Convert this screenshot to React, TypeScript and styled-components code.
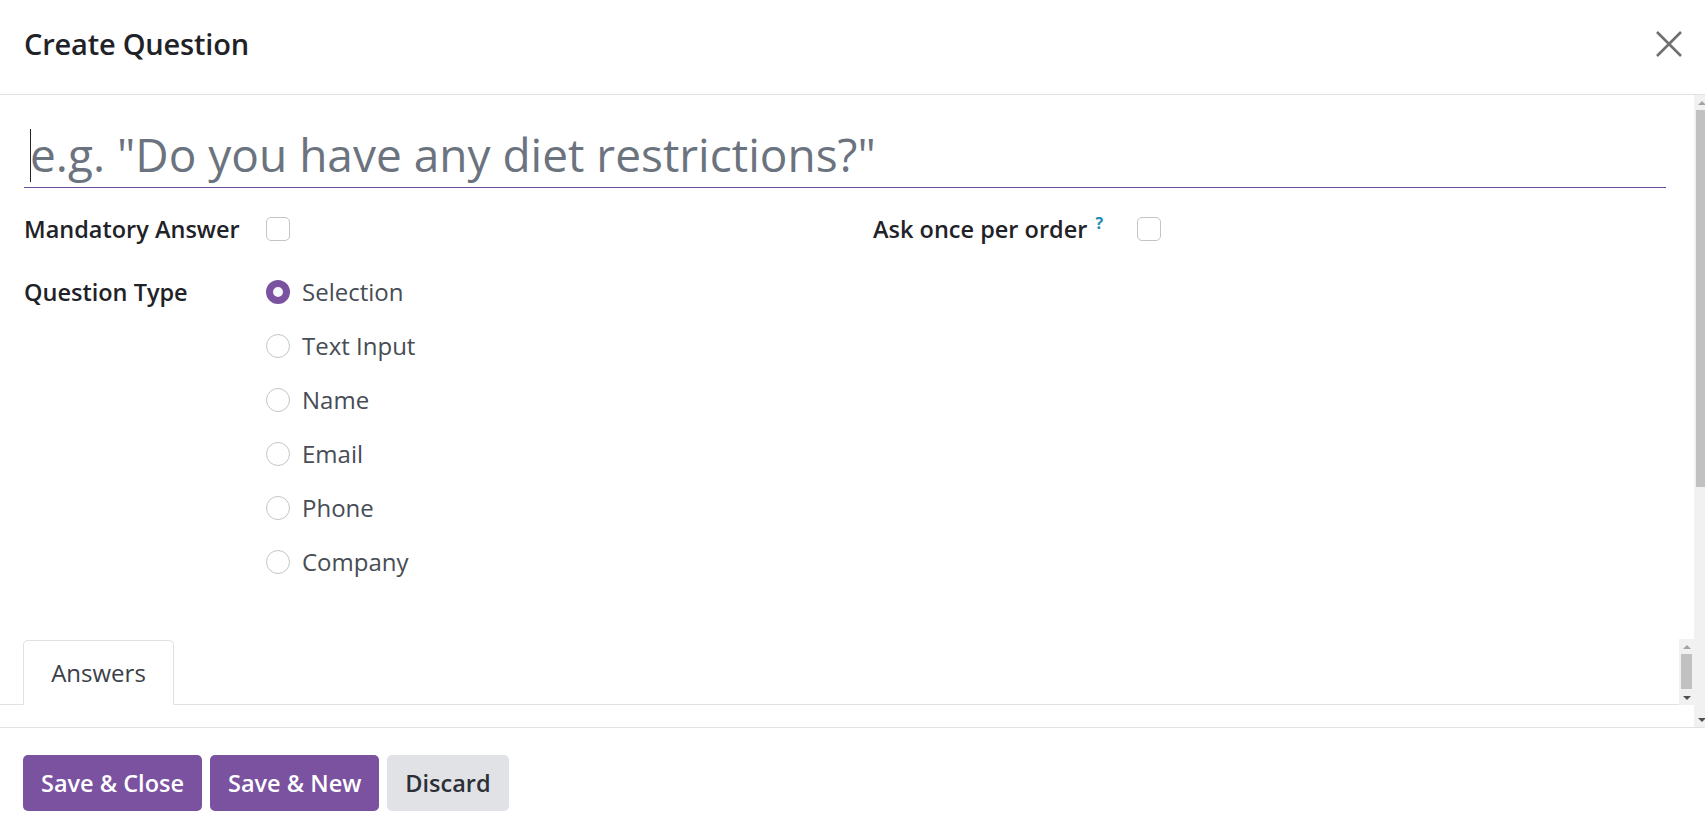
import styled, { createGlobalStyle } from "styled-components";

const GlobalStyle = createGlobalStyle`
  html, body {
    margin: 0;
    padding: 0;
    overflow: hidden;
    background: #ffffff;
  }
  body {
    font-family: "Open Sans", "Noto Sans", sans-serif;
    color: #212529;
  }
  * {
    box-sizing: border-box;
  }
`;

const questionTypes = ["Selection", "Text Input", "Name", "Email", "Phone", "Company"];

// classic grey scrollbar (drawn, the headless browser hides real ones)
function Scrollbar({ thumb }: { thumb: number }) {
  return (
    <Track>
      <Arrow $dir="up" />
      <Thumb style={{ height: thumb }} />
      <TrackRest />
      <Arrow $dir="down" />
    </Track>
  );
}

function App() {
  return (
    <>
      <GlobalStyle />
      <Modal>
        <Header>
          <Title>Create Question</Title>
          <CloseButton aria-label="Close">
            <svg width="26" height="26" viewBox="0 0 26 26">
              <path d="M1 1 L25 25 M25 1 L1 25" stroke="#6f6f6f" strokeWidth="2.6" fill="none" />
            </svg>
          </CloseButton>
        </Header>
        <Body>
          <BodyContent>
            <InputWrap>
              <Caret />
              <TitleInput placeholder={'e.g. "Do you have any diet restrictions?"'} />
            </InputWrap>
            <Groups>
              <Group $labelWidth={242}>
                <Label>Mandatory Answer</Label>
                <Cell>
                  <Checkbox />
                </Cell>
                <Label>Question Type</Label>
                <RadioList>
                  {questionTypes.map((type, i) => (
                    <RadioItem key={type}>
                      <Radio $checked={i === 0} />
                      <RadioText>{type}</RadioText>
                    </RadioItem>
                  ))}
                </RadioList>
              </Group>
              <Group $labelWidth={264}>
                <Label>
                  Ask once per order <Help>?</Help>
                </Label>
                <Cell>
                  <Checkbox />
                </Cell>
              </Group>
            </Groups>
            <TabNav>
              <TabStrip>
                <Tab>Answers</Tab>
              </TabStrip>
              <Scrollbar thumb={35} />
            </TabNav>
          </BodyContent>
          <Scrollbar thumb={377} />
        </Body>
        <Footer>
          <Button $variant="primary">Save &amp; Close</Button>
          <Button $variant="primary">Save &amp; New</Button>
          <Button $variant="secondary">Discard</Button>
        </Footer>
      </Modal>
    </>
  );
}

const Modal = styled.div`
  width: calc(100vw + 4px);
  height: 100vh;
  display: flex;
  flex-direction: column;
  background: #ffffff;
`;

const Header = styled.header`
  height: 95px;
  flex-shrink: 0;
  display: flex;
  align-items: center;
  justify-content: space-between;
  padding: 0 27px 7px 24px;
  border-bottom: 1px solid #e3e1e8;
`;

const Title = styled.h4`
  margin: 0;
  font-size: 29px;
  font-weight: 600;
  color: #1f2328;
  letter-spacing: -0.2px;
`;

const CloseButton = styled.button`
  border: 0;
  background: transparent;
  padding: 0;
  width: 26px;
  height: 26px;
  display: flex;
  cursor: pointer;
`;

const Body = styled.main`
  flex: 1;
  min-height: 0;
  display: flex;
`;

const BodyContent = styled.div`
  flex: 1;
  min-width: 0;
  overflow: hidden;
  padding: 16px 28px 0 24px;
`;

const Track = styled.div`
  width: 15px;
  flex-shrink: 0;
  display: flex;
  flex-direction: column;
  background: #f1f1f1;
`;

const Arrow = styled.div<{ $dir: "up" | "down" }>`
  height: 15px;
  flex-shrink: 0;
  display: flex;
  align-items: center;
  justify-content: center;
  &::before {
    content: "";
    border-left: 4px solid transparent;
    border-right: 4px solid transparent;
    ${(p) =>
      p.$dir === "up" ? "border-bottom: 4px solid #a3a3a3;" : "border-top: 4px solid #505050;"}
  }
`;

const Thumb = styled.div`
  flex-shrink: 0;
  margin: 0 2px;
  background: #c1c1c1;
`;

const TrackRest = styled.div`
  flex: 1;
`;

const InputWrap = styled.div`
  position: relative;
`;

const Caret = styled.span`
  position: absolute;
  left: 6px;
  top: 18px;
  width: 1px;
  height: 53px;
  background: #212529;
`;

const TitleInput = styled.input`
  display: block;
  width: 100%;
  height: 77px;
  border: 0;
  border-bottom: 1px solid #6a4c9c;
  padding: 10px 6px 0 6px;
  font-family: inherit;
  font-size: 46px;
  color: #212529;
  outline: none;
  background: transparent;
  &::placeholder {
    color: #6b737e;
  }
`;

const Groups = styled.div`
  display: grid;
  grid-template-columns: 849px 1fr;
  margin-top: 21px;
`;

const Group = styled.div<{ $labelWidth: number }>`
  display: grid;
  grid-template-columns: ${(p) => p.$labelWidth}px 1fr;
  grid-auto-rows: min-content;
  row-gap: 23px;
  align-items: start;
`;

const Label = styled.div`
  font-size: 23.5px;
  font-weight: 600;
  line-height: 40px;
  color: #1f2328;
  white-space: nowrap;
`;

const Help = styled.sup`
  font-size: 16px;
  font-weight: 700;
  line-height: 0;
  color: #1a8ab8;
  margin-left: 2px;
`;

const Cell = styled.div`
  height: 40px;
  display: flex;
  align-items: center;
`;

const Checkbox = styled.span`
  width: 24px;
  height: 24px;
  border: 1px solid #c4c4c4;
  border-radius: 5px;
  background: #ffffff;
`;

const RadioList = styled.div`
  display: flex;
  flex-direction: column;
  gap: 14px;
`;

const RadioItem = styled.label`
  display: flex;
  align-items: center;
  height: 40px;
  gap: 12px;
  cursor: pointer;
`;

const Radio = styled.span<{ $checked?: boolean }>`
  width: 24px;
  height: 24px;
  border-radius: 50%;
  flex-shrink: 0;
  border: ${(p) => (p.$checked ? "7px solid #7a52a0" : "1px solid #c4c4c4")};
  background: ${(p) => (p.$checked ? "#f6f7fa" : "#ffffff")};
`;

const RadioText = styled.span`
  font-size: 24px;
  color: #474c55;
  line-height: 40px;
`;

const TabNav = styled.div`
  margin: 57px -28px 0 -24px;
  height: 66px;
  display: flex;
`;

const TabStrip = styled.div`
  flex: 1;
  display: flex;
  align-items: flex-end;
  padding-left: 23px;
  border-bottom: 1px solid #dee2e6;
`;

const Tab = styled.div`
  height: 65px;
  width: 151px;
  display: flex;
  align-items: center;
  justify-content: center;
  border: 1px solid #dee2e6;
  border-bottom-color: #ffffff;
  border-radius: 5px 5px 0 0;
  font-size: 24px;
  color: #3b4048;
  margin-bottom: -1px;
  background: #ffffff;
`;

const Footer = styled.footer`
  flex-shrink: 0;
  height: 109px;
  border-top: 1px solid #e3e1e8;
  display: flex;
  align-items: flex-start;
  gap: 8px;
  padding: 27px 23px 0;
`;

const Button = styled.button<{ $variant: "primary" | "secondary" }>`
  height: 56px;
  padding: 0 18px;
  border: 0;
  border-radius: 5px;
  font-family: inherit;
  font-size: 23.5px;
  font-weight: 600;
  cursor: pointer;
  background: ${(p) => (p.$variant === "primary" ? "#7a52a0" : "#e0e2e6")};
  color: ${(p) => (p.$variant === "primary" ? "#ffffff" : "#2c3036")};
`;

export default App;
